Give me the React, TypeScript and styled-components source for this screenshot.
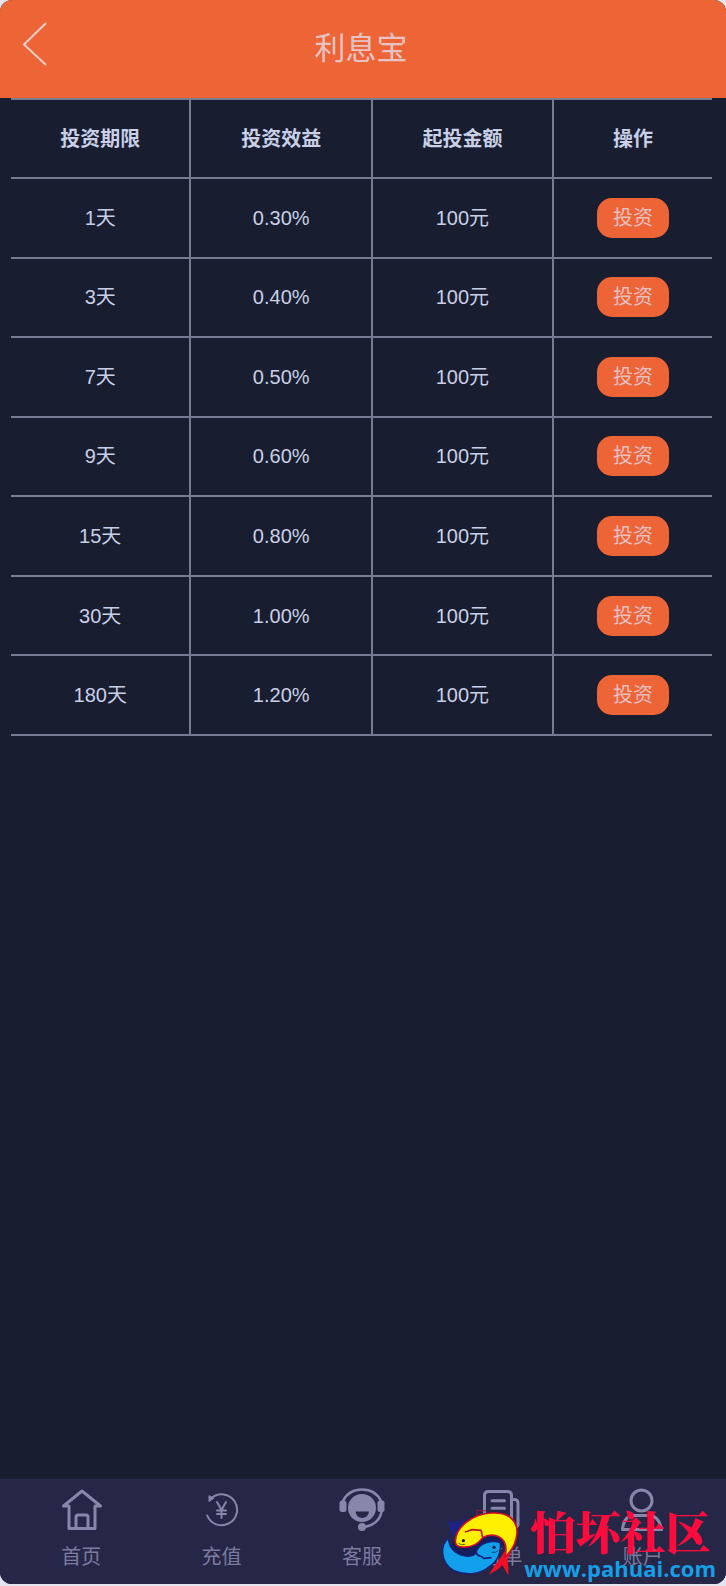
import React from 'react';
import styled, { createGlobalStyle } from 'styled-components';

const Global = createGlobalStyle`
  * { box-sizing: border-box; }
  body {
    margin: 0;
    background: #e4e5ee;
    font-family: "Liberation Sans", "Noto Sans CJK SC", sans-serif;
    color: #c9cfe6;
  }
`;

const Page = styled.div`
  position: relative;
  display: flex;
  flex-direction: column;
  min-height: calc(100vh - 2px);
  background: #181e30;
  border-radius: 12px;
  overflow: hidden;
`;

const Header = styled.header`
  display: grid;
  grid-template-columns: 70px 1fr 74px;
  height: 98px;
  background: #ed6537;
`;

const BackButton = styled.button`
  display: flex;
  padding: 22px 0 0 22px;
  border: 0;
  background: none;
  color: #f3cdc8;
`;

const Title = styled.h1`
  margin: 0;
  font-size: 31px;
  line-height: 98px;
  font-weight: 400;
  text-align: center;
  color: #e6c3c4;
`;

const Main = styled.main`
  flex: 1;
  padding: 0 14px 0 11px;
`;

const Plans = styled.table`
  width: 100%;
  height: 638px;
  table-layout: fixed;
  border-collapse: collapse;
  font-size: 20px;
  line-height: 30px;
`;

const Column = styled.col<{ $share: number }>`
  width: ${(p) => p.$share}%;
`;

const Row = styled.tr`
  border-top: 2px solid #777c92;
  border-bottom: 2px solid #777c92;
`;

const HeadCell = styled.th`
  height: 79px;
  padding: 0;
  font-weight: 700;
  text-align: center;
  & + & { border-left: 2px solid #777c92; }
`;

const Cell = styled.td`
  padding: 0;
  text-align: center;
  & + & { border-left: 2px solid #777c92; }
`;

const InvestButton = styled.button`
  display: block;
  width: 72px;
  height: 40px;
  margin: 0 auto;
  padding: 0;
  border: 0;
  border-radius: 15px;
  background: #ed6537;
  color: #e8bfc0;
  font: inherit;
`;

const TabBar = styled.nav`
  display: grid;
  grid-template-columns: repeat(5, 1fr);
  padding: 0 13px 0 11px;
  height: 105px;
  background: #262747;
`;

const Tab = styled.a`
  display: flex;
  flex-direction: column;
  align-items: center;
  gap: 8px;
  padding-top: 5px;
  font-size: 20px;
  line-height: 30px;
  color: #7c7a9f;
  text-decoration: none;

  svg { color: #8886ab; }
`;

const Watermark = styled.a`
  position: absolute;
  right: 10px;
  bottom: 5px;
  display: flex;
  align-items: flex-end;
  gap: 3px;
  text-decoration: none;
`;

const BrandText = styled.span`
  display: flex;
  flex-direction: column;
  align-items: center;
`;

const BrandName = styled.span`
  font-family: "Liberation Serif", "Noto Serif CJK SC", "Noto Sans CJK SC", serif;
  font-size: 45px;
  line-height: 44px;
  font-weight: 900;
  color: #ff0a3c;
`;

const BrandSite = styled.span`
  font-family: "Open Sans", "Noto Sans", sans-serif;
  font-size: 22px;
  line-height: 22px;
  font-weight: 700;
  color: #169fe6;
`;

const plans = [
  ['1天', '0.30%'],
  ['3天', '0.40%'],
  ['7天', '0.50%'],
  ['9天', '0.60%'],
  ['15天', '0.80%'],
  ['30天', '1.00%'],
  ['180天', '1.20%'],
];

const iconProps = {
  width: 50,
  height: 50,
  viewBox: '0 0 50 50',
  fill: 'none',
  stroke: 'currentColor',
  strokeWidth: 3,
  strokeLinecap: 'round' as const,
  strokeLinejoin: 'round' as const,
  'aria-hidden': true,
};

const HomeIcon = () => (
  <svg {...iconProps}>
    <path d="M13 22H7.500L26 7 44.500 22H39V44.500H13V22M20 44V33Q20 31 22 31H30Q32 31 32 33V44" />
  </svg>
);

const RechargeIcon = () => (
  <svg {...iconProps} strokeWidth={2}>
    <path d="M10.200 31.500A15.500 15.500 0 1 0 14.500 14" />
    <path d="M12 12V17.500L16.500 14.500Z" fill="currentColor" strokeWidth={1} />
    <path d="M20 18L24.500 26 29 18M24.500 26V34M20 26.500H29M20 30H29" />
  </svg>
);

const ServiceIcon = () => (
  <svg {...iconProps}>
    <circle cx="25" cy="24" r="14" fill="currentColor" stroke="none" />
    <path d="M18.500 27.500H32Q31 34 25.200 34T18.500 27.500Z" fill="#262747" stroke="none" />
    <path d="M6 17Q11.500 5.500 25 5.500T44 17" strokeWidth={2.500} />
    <rect x="2.500" y="16.500" width="7" height="11.500" rx="2.500" fill="currentColor" stroke="none" />
    <rect x="40.500" y="16.500" width="7" height="11.500" rx="2.500" fill="currentColor" stroke="none" />
    <path d="M45 26Q42.500 41 26.500 43" strokeWidth={2.500} />
    <circle cx="25" cy="43" r="4" fill="currentColor" stroke="none" />
  </svg>
);

const OrderIcon = () => (
  <svg {...iconProps}>
    <path d="M33 43H11.500Q7.500 43 7.500 39V11.500Q7.500 7.500 11.500 7.500H30.500Q34.500 7.500 34.500 11.500V39Q34.500 43 38 43T41 39V19Q41 15.500 37 15.500M15 16.700H27.500M15 24.300H27.500M15 32H23" />
  </svg>
);

const AccountIcon = () => (
  <svg {...iconProps}>
    <circle cx="23.500" cy="16.500" r="10.500" />
    <path d="M4.500 45.500Q6 31.500 16 31.500H31Q41 31.500 43.500 45.500Z" />
  </svg>
);

const FishLogo = () => (
  <svg width="84" height="72" viewBox="0 0 252 216" strokeLinejoin="round" aria-hidden="true">
    <path d="M33 38L50 48 62 38 66 50 86 24 78 62 45 90Z" fill="#1c2387" />
    <path d="M120 32V11H150" fill="none" stroke="#a6133a" strokeWidth="3" />
    <path d="M48 100L70 122 135 92 190 86 206 110 150 150 90 160 40 130Z" fill="#161d5c" />
    <path d="M35 94C10 112 8 165 50 190C90 208 135 200 158 178C178 165 192 142 190 108C165 98 125 108 118 136C108 152 78 152 56 136C40 124 34 110 35 94Z" fill="#12a0ec" stroke="#16217b" strokeWidth="4" />
    <path d="M220 96C212 130 182 160 155 204L184 186 196 174 215 206 212 156C226 134 228 112 220 96Z" fill="#ef1026" />
    <path d="M55 102C56 62 105 20 165 18C215 16 242 40 240 78C238 108 222 134 204 150C210 124 206 98 182 88C165 82 150 84 137 92C124 112 100 122 75 120C60 119 55 114 55 102Z" fill="#fff000" stroke="#d20b29" strokeWidth="5" />
    <path d="M84 74C92 76 98 68 108 68L132 70C136 78 132 82 138 92" fill="none" stroke="#c4142c" strokeWidth="5" />
    <path d="M118 136C120 152 136 144 140 154L164 152" fill="none" stroke="#16217b" strokeWidth="5" />
    <circle cx="79" cy="101" r="5" fill="#171c30" />
    <circle cx="171" cy="121" r="5" fill="#171c30" />
    <path d="M64 108Q72 116 84 112M164 136Q178 138 184 130" fill="none" stroke="#171c30" strokeWidth="2" />
  </svg>
);

const tabs = [
  { label: '首页', Icon: HomeIcon },
  { label: '充值', Icon: RechargeIcon },
  { label: '客服', Icon: ServiceIcon },
  { label: '订单', Icon: OrderIcon },
  { label: '账户', Icon: AccountIcon },
];

export default function App() {
  return (
    <Page>
      <Global />
      <Header>
        <BackButton aria-label="返回">
          <svg width="26" height="46" viewBox="0 0 26 46" fill="none" stroke="currentColor" strokeWidth="2" aria-hidden="true">
            <path d="M24 1L2 22.500 24 43" />
          </svg>
        </BackButton>
        <Title>利息宝</Title>
      </Header>
      <Main>
        <Plans>
          <colgroup>
            <Column $share={25.600} />
            <Column $share={25.900} />
            <Column $share={25.800} />
            <Column $share={22.700} />
          </colgroup>
          <thead>
            <Row>
              <HeadCell scope="col">投资期限</HeadCell>
              <HeadCell scope="col">投资效益</HeadCell>
              <HeadCell scope="col">起投金额</HeadCell>
              <HeadCell scope="col">操作</HeadCell>
            </Row>
          </thead>
          <tbody>
            {plans.map(([term, rate]) => (
              <Row key={term}>
                <Cell>{term}</Cell>
                <Cell>{rate}</Cell>
                <Cell>100元</Cell>
                <Cell><InvestButton>投资</InvestButton></Cell>
              </Row>
            ))}
          </tbody>
        </Plans>
      </Main>
      <TabBar>
        {tabs.map(({ label, Icon }) => (
          <Tab href="#" key={label}>
            <Icon />
            {label}
          </Tab>
        ))}
      </TabBar>
      <Watermark href="#">
        <FishLogo />
        <BrandText>
          <BrandName>怕坏社区</BrandName>
          <BrandSite>www.pahuai.com</BrandSite>
        </BrandText>
      </Watermark>
    </Page>
  );
}
